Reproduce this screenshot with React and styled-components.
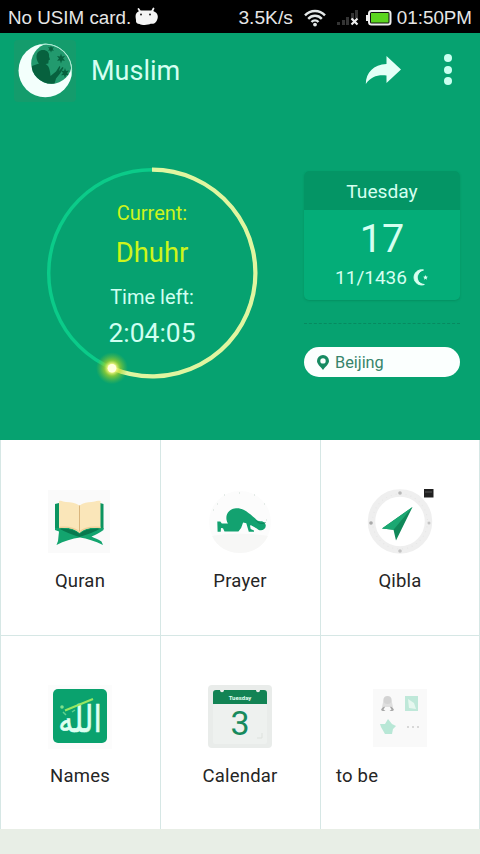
import React from 'react';
import styled, {createGlobalStyle} from 'styled-components';

const GlobalStyle = createGlobalStyle`
    * {
        box-sizing: border-box;
    }
    body {
        margin: 0;
        background: #e8eee6;
        font-family: Roboto, "Noto Sans", sans-serif;
    }
`

function AndroidIcon() {
    return (
        <svg width="25" height="19" viewBox="0 0 25 19">
            <path d="M4.500 2l2 3M19.500 1.500l-1.500 3" stroke="#f2f2f2" strokeWidth="1.800" strokeLinecap="round"/>
            <path d="M3 5.500C6 2.800 9 3.600 12 3.600s6-.8 9 1.400c3.500 2 3.400 6 1.600 9-1.300 2.400-3 3-6 2.800-2 1.400-9 1.600-11 .2-2.500 0-4-1.500-3.600-4C1.500 10 1 7.500 3 5.500z" fill="#f5f5f5"/>
            <circle cx="7" cy="7.500" r="1" fill="#222"/>
            <circle cx="16" cy="7.500" r="1" fill="#222"/>
        </svg>
    );
}

function WifiIcon() {
    return (
        <svg width="24" height="18" viewBox="0 0 24 18" fill="none" stroke="#e4e8e8" strokeWidth="2.400">
            <path d="M2 6.400C7.500.6 16.500.6 22 6.400"/>
            <path d="M5.200 9.800c3.800-4 9.800-4 13.600 0"/>
            <path d="M8.500 13c2-2.200 5-2.200 7 0"/>
            <circle cx="12" cy="15.600" r="1.900" fill="#e4e8e8" stroke="none"/>
        </svg>
    );
}

function SignalIcon() {
    return (
        <svg width="23" height="18" viewBox="0 0 23 18">
            <path d="M1 13h3v3H1zM6 11h3v5H6zM10 8h3v8h-3zM15 4h3v6h-3zM19 1h3v8h-3z" fill="#343434"/>
            <path d="M15.500 9.500l6 6M21.500 9.500l-6 6" stroke="#eee" strokeWidth="2.200"/>
        </svg>
    );
}

function BatteryIcon() {
    return (
        <svg width="26" height="18" viewBox="0 0 26 18">
            <path d="M0 6h4v6H0z" fill="#eee"/>
            <rect x="3" y="2" width="21.500" height="13.500" rx="2.500" fill="#111" stroke="#eee" strokeWidth="2"/>
            <rect x="5" y="4" width="17.500" height="9.500" fill="#5bd51f"/>
        </svg>
    );
}

function MoonLogo() {
    return (
        <svg width="62" height="62" viewBox="0 0 62 62">
            <defs>
                <clipPath id="disc">
                    <circle cx="31.300" cy="30.500" r="26.300"/>
                </clipPath>
                <clipPath id="sky">
                    <circle cx="37.500" cy="23.500" r="20.300"/>
                </clipPath>
            </defs>
            <rect width="62" height="62" rx="4" fill="#149c6c"/>
            <circle cx="31.300" cy="30.500" r="26.800" fill="#f3fffc"/>
            <g clipPath="url(#disc)">
                <circle cx="37.500" cy="23.500" r="20.300" fill="#229a6e"/>
                <g clipPath="url(#sky)" fill="#07613e">
                    <path d="M22.500 17c0-5 3-7 6.500-7 4.500 0 6.500 3 6 6.500l1 3-1.300.8-.4 3.200-2.800.5c3.500 1.500 4.500 6 5 12l5.500-4.500 3.500-5.500.8.800-1.300 4.200 3.500-4 1 .8-3 5.200-4.500 5.500-2 7H18V26l7-2.500c-1.500-1.500-2.500-4.500-2.500-6.500z"/>
                    <path d="M37 5.500l.8 2 2.100-.4-1.300 1.800 1.300 1.800-2.100-.3-.8 2-.8-2-2.100.3 1.300-1.800-1.300-1.800 2.100.4z"/>
                    <path d="M47 13.500l1 3 3-.5-2 2.400 2 2.400-3-.4-1 3-1-3-3 .4 2-2.400-2-2.400 3 .5z"/>
                    <path d="M51 28l1 3 3-.5-2 2.400 2 2.400-3-.4-1 3-1-3-3 .4 2-2.400-2-2.400 3 .5z"/>
                </g>
            </g>
            <path d="M26 4.600A26.500 26.500 0 0 1 57.500 34" fill="none" stroke="#a9ecd2" strokeWidth="1"/>
        </svg>
    );
}

function ShareIcon() {
    return (
        <svg width="36" height="29" viewBox="0 0 36 29">
            <path d="M21.500 0L36 13.500 21.500 27v-7.500C13 18.500 6 20.500.800 28 1 16.500 8.500 8.500 21.500 8z" fill="#e3fff6"/>
        </svg>
    );
}

function DialRing() {
    return (
        <svg width="240" height="226" viewBox="0 0 240 226">
            <defs>
                <radialGradient id="glow">
                    <stop offset="0" stopColor="#ffffe0"/>
                    <stop offset=".25" stopColor="#f7f98a"/>
                    <stop offset=".5" stopColor="#b9d820" stopOpacity=".65"/>
                    <stop offset="1" stopColor="#7fc52c" stopOpacity="0"/>
                </radialGradient>
            </defs>
            <circle cx="120" cy="113" r="103.300" fill="none" stroke="#0bcb89" strokeWidth="3.500"/>
            <path d="M120 9.700A103.300 103.300 0 1 1 80 208.200" fill="none" stroke="#e0f5a0" strokeWidth="4.200"/>
            <circle cx="80" cy="208.200" r="16" fill="url(#glow)"/>
            <circle cx="80" cy="208.200" r="4.300" fill="#ffffdc"/>
        </svg>
    );
}

function CrescentIcon() {
    return (
        <svg width="17" height="17" viewBox="0 0 17 17">
            <path d="M11.500 1A7.600 7.600 0 1 0 12.300 15.500C2.800 14.500 3.500 3 11.500 1z" fill="#d8fff0" stroke="#d8fff0" strokeWidth="1"/>
            <path d="M13.500 6l.7 1.600 1.700.2-1.300 1.200.4 1.700-1.500-.9-1.500.9.400-1.700-1.300-1.200 1.700-.2z" fill="#d8fff0"/>
        </svg>
    );
}

function PinIcon() {
    return (
        <svg width="12" height="15" viewBox="0 0 12 15">
            <path d="M6 0a6 6 0 0 1 6 6c0 3-3 5-6 9C3 11 0 9 0 6a6 6 0 0 1 6-6zm0 3.200A2.700 2.700 0 1 0 6 8.600a2.700 2.700 0 0 0 0-5.400z" fill="#168a61" fillRule="evenodd"/>
        </svg>
    );
}

function QuranIcon() {
    return (
        <svg width="64" height="64" viewBox="0 0 64 64">
            <rect width="62" height="63" fill="#fafafa"/>
            <path d="M7 14l4-1v26H7zM52 13l3.500 1v25H52z" fill="#0b9460"/>
            <path d="M7 38h48.500v2c-4 3-8 5-12 6.500 3 1.500 7 3 10 5l1.500 3.500c-8-4-16-6.500-23-7.500-8 1-16 3.500-23.500 7.500l1.500-4 1-9.500L7 40z" fill="#13a46e"/>
            <path d="M11 38.500c8 0 16 1 20.500 5.500 5-4.500 11-5.500 21-5.500-5 3-13 6-21 8.500-7-2-14.500-5-20.500-8.500z" fill="#08794e"/>
            <path d="M11 11c3-1 4 1 7 1 5 0 9 .5 13.500 3.500 4-3 8-3.500 12-3.500 3 0 5-2 9-1v27c-9-1-16 0-21 5-5-5-12.500-6-20.500-5z" fill="#fae6b9"/>
            <path d="M31.500 15.500V43" stroke="#d9b57d" strokeWidth="1"/>
            <path d="M11 37.500c8-1 15 0 20.500 4.500 5-4.500 12-5.500 21-4.500" fill="none" stroke="#edcf98" strokeWidth="1.400"/>
        </svg>
    );
}

function PrayerIcon() {
    return (
        <svg width="64" height="64" viewBox="0 0 64 64">
            <circle cx="32" cy="32" r="31" fill="#fcfcfc"/>
            <path d="M4 46c14-3 42-3 56 0-5 11-16 17-28 17S9 57 4 46z" fill="#f7f7f6"/>
            <path d="M16 5h1M31 3h1M46 5h1M56 14h1M5 20h1M58 30h1M9 14h1" stroke="#dbe5e0" strokeWidth="1.500"/>
            <path d="M9.300 31.500h3l1.500 2H20C16 27 19.500 19 28 18.300 35 17.800 41 23 47 28.300c1.500 2 3 2.900 5.500 2.900 3 0 5.300 2 5.300 4.600-.3 4.500-5.800 6.200-9 2.700L43 35.300l-1 .2.700 3.500 3.300 1.500v1.300h-5.200l-2.500-8.500-3.200-.8-2 5.500-2.700 3.500H16.500L15 38.300l-2-.3-.3 3.800H9.600z" fill="#13a270"/>
            <path d="M48 30.500c3 3.500 6 3.500 9.500 2" stroke="#0b7750" strokeWidth=".8" fill="none"/>
        </svg>
    );
}

function QiblaIcon() {
    return (
        <svg width="70" height="66" viewBox="0 0 70 66">
            <circle cx="35" cy="32.500" r="28.500" fill="#fff" stroke="#efefef" strokeWidth="7.500"/>
            <circle cx="35" cy="32.500" r="27.500" fill="none" stroke="#e7e7e7" strokeWidth="1.200" strokeDasharray="1 4"/>
            <circle cx="35" cy="4" r="1.800" fill="#b7b7b7"/>
            <circle cx="6" cy="34" r="1.800" fill="#aaa"/>
            <circle cx="64" cy="34" r="1.500" fill="#c4c4c4"/>
            <circle cx="35" cy="62" r="1.800" fill="#c3c3c3"/>
            <path d="M47.500 18L17 39.500l11.500 1.300 2.500 10.700z" fill="#108859"/>
            <path d="M47.500 18L28.500 40.800 17 39.500z" fill="#1ba872"/>
            <path d="M59 0h9.500v8.500H59z" fill="#202020"/>
            <path d="M60 3h7" stroke="#555" strokeWidth="1"/>
        </svg>
    );
}

function NamesIcon() {
    return (
        <svg width="64" height="64" viewBox="0 0 64 64">
            <rect width="64" height="64" fill="#fcfcfc"/>
            <rect x="5" y="4" width="54" height="54" rx="5" fill="#0aa26e"/>
            <text transform="translate(32 47) scale(1 1.250)" textAnchor="middle" fontSize="30" fontFamily="DejaVu Sans" fill="#ddfff1" stroke="#ddfff1" strokeWidth=".5">الله</text>
            <path d="M17 25.500l28-11.500" stroke="#98e763" strokeWidth="2"/>
            <circle cx="14" cy="22" r="1.800" fill="#7fe08c"/>
            <path d="M15 27l3 3M24 27l3-2" stroke="#5fd08f" strokeWidth="1.500"/>
        </svg>
    );
}

function CalendarIcon() {
    return (
        <svg width="64" height="64" viewBox="0 0 64 64">
            <rect width="64" height="63" rx="4" fill="#e9ecea"/>
            <rect x="5" y="19" width="54" height="40" rx="2" fill="#eef1ef"/>
            <path d="M5 19V8q0-3 3-3h4c0 3 4 3 4 0h32c0 3 4 3 4 0h4q3 0 3 3v11z" fill="#128354"/>
            <text x="32" y="15" textAnchor="middle" fontSize="6" fontWeight="700" fill="#e0fff1">Tuesday</text>
            <text x="32" y="49.500" textAnchor="middle" fontSize="34" fill="#178a5d">3</text>
            <path d="M49 53h5v-5" fill="none" stroke="#dde1dd"/>
        </svg>
    );
}

function MoreIcon() {
    return (
        <svg width="64" height="64" viewBox="0 0 64 64">
            <rect x="5" y="4" width="54" height="58" fill="#f9f9f9"/>
            <path d="M16 13h7l2 9H14z" fill="#dedede"/>
            <circle cx="19.500" cy="15" r="4" fill="#d3d3d3"/>
            <path d="M13 25c1-3 3-4 4-3l-1.500 2.500 2 1.500h-3zM26 25c-1-3-3-4-4-3l1.500 2.500-2 1.500h3z" fill="#a8a8a8"/>
            <path d="M37 11h13v15H37z" fill="#bfe8d9"/>
            <path d="M40 14l6 4 2 6-7-1z" fill="#e6f7ef"/>
            <path d="M20 34l4 5 4 2-3 3-1 5h-7l-4-7-1-3h5z" fill="#b8e7d6"/>
            <circle cx="40" cy="42" r="1" fill="#ccc"/>
            <circle cx="45" cy="42" r="1" fill="#ccc"/>
            <circle cx="50" cy="42" r="1" fill="#ccc"/>
        </svg>
    );
}

const tiles = [
    {name: 'Quran', Icon: QuranIcon},
    {name: 'Prayer', Icon: PrayerIcon},
    {name: 'Qibla', Icon: QiblaIcon},
    {name: 'Names', Icon: NamesIcon},
    {name: 'Calendar', Icon: CalendarIcon},
    {name: 'to be', Icon: MoreIcon, left: true},
];

function App() {
    return (
        <Screen>
            <GlobalStyle/>
            <StatusBar>
                <span>No USIM card.</span>
                <AndroidIcon/>
                <StatusRight>
                    <span>3.5K/s</span>
                    <WifiIcon/>
                    <SignalIcon/>
                    <BatteryIcon/>
                    <span>01:50PM</span>
                </StatusRight>
            </StatusBar>
            <TopBar>
                <MoonLogo/>
                <Title>Muslim</Title>
                <ShareIcon/>
                <MenuDots>
                    <Dot/>
                    <Dot/>
                    <Dot/>
                </MenuDots>
            </TopBar>
            <Hero>
                <Dial>
                    <DialRing/>
                    <DialText>
                        <DialLine $size="20px" $height="32px" $yellow>Current:</DialLine>
                        <DialLine $size="27.400px" $height="48px" $yellow>Dhuhr</DialLine>
                        <DialLine $size="20px" $height="40px">Time left:</DialLine>
                        <DialLine $size="26.400px" $height="32px">2:04:05</DialLine>
                    </DialText>
                </Dial>
                <DateColumn>
                    <DateCard>
                        <Weekday>Tuesday</Weekday>
                        <Day>17</Day>
                        <Month>11/1436 <CrescentIcon/></Month>
                    </DateCard>
                    <Divider/>
                    <Place><PinIcon/>Beijing</Place>
                </DateColumn>
            </Hero>
            <TileGrid>
                {tiles.map(({name, Icon, left}) => (
                    <Tile key={name}>
                        <TileIcon><Icon/></TileIcon>
                        <TileName $left={left}>{name}</TileName>
                    </Tile>
                ))}
            </TileGrid>
        </Screen>
    );
}

const Screen = styled.div`
    width: 480px;
    height: 854px;
    overflow: hidden;
    background: #e8eee6;
    svg {
        display: block;
        flex-shrink: 0;
    }
`

const StatusBar = styled.div`
    display: flex;
    align-items: center;
    height: 33px;
    padding: 2px 8px 0;
    background: #000;
    color: #e6e6e6;
    font-family: "Liberation Sans", sans-serif;
    font-size: 18.8px;
    white-space: nowrap;
    > svg {
        margin: -2px 0 0 3px;
    }
`

const StatusRight = styled.div`
    display: flex;
    align-items: center;
    margin-left: auto;
    span:first-child {
        font-size: 19.2px;
    }
    svg:nth-of-type(1) {
        margin-left: 10px;
    }
    svg:nth-of-type(2) {
        margin-left: 9px;
    }
    svg:nth-of-type(3) {
        margin: 0 5px 0 7px;
    }
`

const TopBar = styled.header`
    display: flex;
    align-items: center;
    height: 75px;
    padding: 0 28px 0 14px;
    background: #06a270;
`

const Title = styled.h1`
    flex: 1;
    margin: 0 0 0 15px;
    color: #d5fff1;
    font-size: 27px;
    font-weight: 400;
`

const MenuDots = styled.div`
    display: flex;
    flex-direction: column;
    gap: 3.5px;
    margin: -2px 0 0 43px;
`

const Dot = styled.i`
    width: 8px;
    height: 8px;
    border-radius: 50%;
    background: #c9fff0;
`

const Hero = styled.section`
    display: flex;
    height: 332px;
    padding: 52px 20px 0 32px;
    background: #06a270;
`

const Dial = styled.div`
    display: grid;
    width: 240px;
    height: 226px;
    > * {
        grid-area: 1 / 1;
    }
`

const DialText = styled.div`
    padding-top: 37px;
    text-align: center;
`

const DialLine = styled.div`
    height: ${props => props.$height};
    line-height: ${props => props.$height};
    font-size: ${props => props.$size};
    color: ${props => props.$yellow ? '#cdf51b' : '#d0fff1'};
`

const DateColumn = styled.div`
    width: 156px;
    margin: 11px 0 0 auto;
`

const DateCard = styled.div`
    height: 129px;
    border-radius: 5px;
    overflow: hidden;
    background: #04ad78;
    box-shadow: 0 1px 2px rgba(0, 90, 55, 0.25);
    color: #d5fff0;
    text-align: center;
`

const Weekday = styled.div`
    height: 39px;
    background: #049565;
    font-size: 19.2px;
    line-height: 42px;
`

const Day = styled.div`
    height: 53px;
    font-size: 39.5px;
    line-height: 57px;
`

const Month = styled.div`
    display: flex;
    align-items: center;
    justify-content: center;
    gap: 5px;
    height: 29px;
    font-size: 19px;
`

const Divider = styled.div`
    margin: 23px 0;
    border-top: 1px dashed #078a60;
`

const Place = styled.div`
    display: flex;
    align-items: center;
    gap: 6px;
    height: 30px;
    padding-left: 13px;
    border-radius: 15px;
    background: #fbfffe;
    color: #36846b;
    font-size: 16.3px;
`

const TileGrid = styled.main`
    display: grid;
    grid-template-columns: repeat(3, 160px);
    grid-template-rows: 195px 194px;
`

const Tile = styled.div`
    padding: 50px 1px 0 0;
    background: #fff;
    border-left: 1px solid #d6e7e5;
    &:nth-child(3n) {
        padding-right: 0;
        border-right: 1px solid #d6e7e5;
    }
    &:nth-child(n + 4) {
        padding-top: 49px;
        border-top: 1px solid #d6e7e5;
    }
`

const TileIcon = styled.div`
    display: flex;
    align-items: center;
    justify-content: center;
    height: 64px;
`

const TileName = styled.div`
    padding: ${props => props.$left ? '0 15px' : '0'};
    margin-top: 16px;
    color: #252525;
    font-size: 18.5px;
    letter-spacing: 0.2px;
    line-height: 22px;
    text-align: ${props => props.$left ? 'left' : 'center'};
`

export default App;
